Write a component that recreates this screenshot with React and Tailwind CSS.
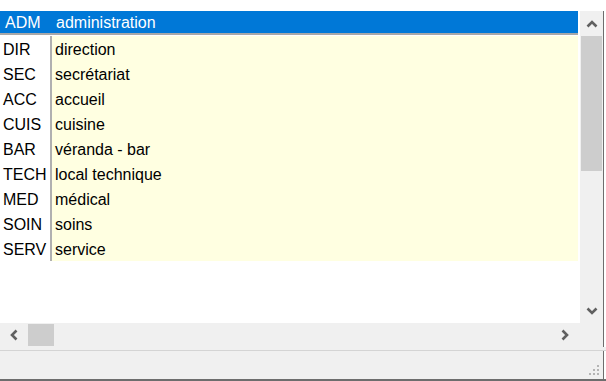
import React from "react";

const rows = [
  ["DIR", "direction"],
  ["SEC", "secrétariat"],
  ["ACC", "accueil"],
  ["CUIS", "cuisine"],
  ["BAR", "véranda - bar"],
  ["TECH", "local technique"],
  ["MED", "médical"],
  ["SOIN", "soins"],
  ["SERV", "service"],
];

const Chevron = ({ dir }) => {
  const paths = {
    up: "M1.5 7.5 L6 3 L10.5 7.5",
    down: "M1.5 2.5 L6 7 L10.5 2.5",
    left: "M7.5 1.5 L3 6 L7.5 10.5",
    right: "M2.5 1.5 L7 6 L2.5 10.5",
  };
  const vertical = dir === "up" || dir === "down";
  return (
    <svg
      width={vertical ? 12 : 10}
      height={vertical ? 10 : 12}
      viewBox={vertical ? "0 0 12 10" : "0 0 10 12"}
    >
      <path d={paths[dir]} fill="none" stroke="#606060" strokeWidth="2.6" />
    </svg>
  );
};

export default function App() {
  return (
    <div
      className="w-[606px] h-[381px] bg-white flex flex-col overflow-hidden"
      style={{ fontFamily: '"Liberation Sans", Arial, sans-serif' }}
    >
      <div className="h-[11px] shrink-0 bg-white" />
      <div className="flex h-[312px] shrink-0">
        {/* list */}
        <div className="w-[578px] shrink-0 flex flex-col text-[16px] leading-[25px] text-black">
          <div className="h-[22px] bg-[#0078d7] text-white flex items-center pt-[1px]">
            <div className="w-[51px] pl-[5px]">ADM</div>
            <div className="pl-[5px]">administration</div>
          </div>
          <div className="h-[2px] bg-[#a8a8a8]" />
          <div className="h-[1px] bg-white" />
          {rows.map(([c, l]) => (
            <div key={c} className="h-[25px] flex">
              <div className="w-[50px] pl-[3px] pt-[1px] bg-white whitespace-nowrap overflow-hidden">{c}</div>
              <div className="w-[2px] bg-[#b0b0b0]" />
              <div className="flex-1 bg-[#ffffe1] pl-[3px] pt-[1px]">{l}</div>
            </div>
          ))}
        </div>
        <div className="w-[2px] shrink-0 bg-white" />
        {/* vertical scrollbar */}
        <div className="w-[23px] shrink-0 bg-[#f0f0f0] flex flex-col">
          <div className="h-[25px] flex items-center justify-center">
            <Chevron dir="up" />
          </div>
          <div className="h-[135px] mx-[1px] bg-[#cdcdcd]" />
          <div className="flex-1" />
          <div className="h-[25px] flex items-center justify-center">
            <Chevron dir="down" />
          </div>
        </div>
        <div className="w-[1px] shrink-0 bg-[#6d6d6d]" />
        <div className="flex-1 bg-white" />
      </div>
      {/* horizontal scrollbar */}
      <div className="flex h-[24px] shrink-0">
        <div className="w-[603px] shrink-0 bg-[#f0f0f0] flex items-center">
          <div className="w-[28px] h-full flex items-center justify-center">
            <Chevron dir="left" />
          </div>
          <div className="w-[26px] h-[22px] bg-[#cdcdcd]" />
          <div className="flex-1" />
          <div className="w-[28px] h-full flex items-center justify-center mr-[24px]">
            <Chevron dir="right" />
          </div>
        </div>
        <div className="w-[1px] shrink-0 bg-[#6d6d6d]" />
        <div className="flex-1 bg-white" />
      </div>
      <div className="h-[3px] shrink-0 bg-[#f0f0f0]" />
      <div className="h-[1px] shrink-0 bg-[#d4d4d4]" />
      <div className="flex-1 flex">
        <div className="w-[603px] shrink-0 bg-[#f0f0f0] relative">
          <svg className="absolute right-[3px] bottom-[3px]" width="12" height="12" viewBox="0 0 12 12">
            {[
              [10, 2], [10, 6], [6, 6], [10, 10], [6, 10], [2, 10],
            ].map(([x, y], i) => (
              <rect key={i} x={x - 1} y={y - 1} width="2" height="2" fill="#b4b4b4" />
            ))}
          </svg>
        </div>
        <div className="w-[1px] shrink-0 bg-[#6d6d6d]" />
        <div className="flex-1 bg-white" />
      </div>
      <div className="h-[2px] shrink-0 bg-[#6d6d6d]" />
    </div>
  );
}
